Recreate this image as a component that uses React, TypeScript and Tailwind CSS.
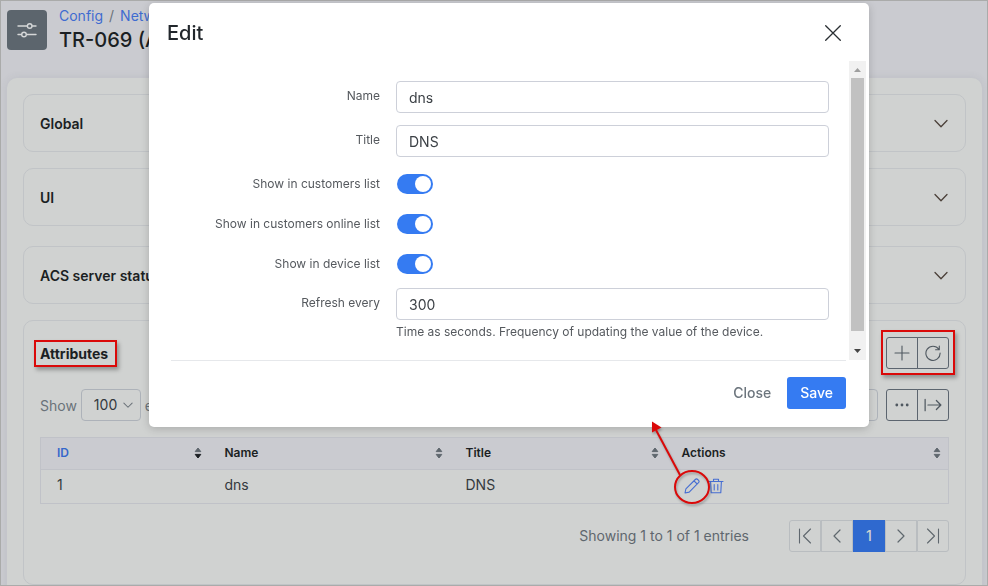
import type { ReactNode } from "react";

function Icon({ children, className = "size-4" }: { children: ReactNode; className?: string }) {
  return (
    <svg
      viewBox="0 0 16 16"
      className={`${className} shrink-0`}
      fill="none"
      stroke="currentColor"
      strokeLinecap="round"
      strokeLinejoin="round"
      aria-hidden="true"
    >
      {children}
    </svg>
  );
}

function Collapsed({ title }: { title: string }) {
  return (
    <section className="rounded-[10px] border border-[#c1c4c7]">
      <button type="button" className="flex h-14 w-full items-center justify-between px-4 pt-0.5 text-sm font-semibold text-[#1b1f23]">
        {title}
        <Icon>
          <path d="M2 4.500 8 10.700 14 4.500" stroke="#4b4039" strokeWidth="1.3" />
        </Icon>
      </button>
    </section>
  );
}

function SortIcon({ active = false }: { active?: boolean }) {
  return (
    <svg viewBox="0 0 8 12" className="h-3 w-2" aria-hidden="true">
      <path d="M4 1 6.8 4.6H1.2z" fill="#5f676e" stroke="#5f676e" strokeLinejoin="round" />
      <path d="M4 11 6.8 7.4H1.2z" fill={active ? "#1b1f23" : "#5f676e"} stroke={active ? "#1b1f23" : "#5f676e"} strokeLinejoin="round" />
    </svg>
  );
}

function Head({ label, width = "", active = false }: { label: string; width?: string; active?: boolean }) {
  return (
    <th scope="col" className={`h-8 p-0 text-left text-xs font-semibold ${width} ${active ? "text-[#3566cb]" : "text-[#1b1f23]"}`}>
      <div className="flex items-center justify-between pr-[7px] pb-0.5 pl-4">
        {label}
        <SortIcon active={active} />
      </div>
    </th>
  );
}

function TextRow({ id, label, value, help }: { id: string; label: string; value: string; help?: string }) {
  return (
    <div className="flex gap-4">
      <label htmlFor={id} className="h-[30px] w-[209px] shrink-0 text-right text-xs leading-[30px] text-[#55595e]">
        {label}
      </label>
      <div className="grow">
        <input
          id={id}
          type="text"
          defaultValue={value}
          className="block h-8 w-full rounded-sm border border-[#cdd0d9] bg-white px-3 pt-px text-sm text-[#3c4146] outline-none"
        />
        {help && <p className="pt-0.5 text-xs leading-5 text-[#55595e]">{help}</p>}
      </div>
    </div>
  );
}

function SwitchRow({ id, label }: { id: string; label: string }) {
  return (
    <div className="flex h-5 items-center gap-[17px]">
      <label htmlFor={id} className="w-[209px] shrink-0 text-right text-xs leading-5 text-[#55595e]">
        {label}
      </label>
      <input
        id={id}
        type="checkbox"
        role="switch"
        defaultChecked
        className="flex h-5 w-9 appearance-none items-center rounded-full bg-[#c5cad1] px-0.5 before:size-4 before:rounded-full before:bg-white checked:justify-end checked:bg-[#357bf2]"
      />
    </div>
  );
}

function EditDialog() {
  return (
    <div className="fixed inset-0 z-10 flex items-start justify-center pt-[3px] pl-[30px]">
      <div role="dialog" aria-labelledby="dialog-title" className="w-[720px] rounded-[5px] bg-white shadow-[0_2px_8px_rgba(0,0,0,0.18)]">
        <header className="flex h-[58px] items-center justify-between pt-0.5 pr-7 pl-[18px]">
          <h2 id="dialog-title" className="text-xl font-medium text-[#22272c]">Edit</h2>
          <button type="button" aria-label="Close dialog" className="text-[#2a2f33]">
            <Icon>
              <path d="M.7.7 15.3 15.3M15.3.7.7 15.3" strokeWidth="1.3" />
            </Icon>
          </button>
        </header>
        <div className="flex gap-[3px] pr-[3px] pl-[22px]">
          <div className="flex h-[300px] grow flex-col gap-3 border-b border-[#e6e8eb] pt-5 pr-[17px]">
            <TextRow id="name" label="Name" value="dns" />
            <TextRow id="title" label="Title" value="DNS" />
            <div className="flex flex-col gap-5 pt-[5px] pb-0.5">
              <SwitchRow id="customers" label="Show in customers list" />
              <SwitchRow id="online" label="Show in customers online list" />
              <SwitchRow id="device" label="Show in device list" />
            </div>
            <TextRow
              id="refresh"
              label="Refresh every"
              value="300"
              help="Time as seconds. Frequency of updating the value of the device."
            />
          </div>
          <div aria-hidden="true" className="flex h-[299px] w-[17px] shrink-0 flex-col items-center bg-[#f1f1f1]">
            <svg viewBox="0 0 17 17" className="size-[17px]">
              <path d="M5 11h7L8.500 7z" fill="#9f9f9f" />
            </svg>
            <div className="w-[13px] grow bg-[#c1c1c1]" />
            <svg viewBox="0 0 17 29" className="h-[29px] w-[17px]">
              <path d="M5 18h7l-3.500 4z" fill="#454545" />
            </svg>
          </div>
        </div>
        <footer className="flex items-center justify-end gap-4 pt-4 pr-[23px] pb-[18px]">
          <button type="button" className="h-8 text-sm font-medium text-[#6c757d]">Close</button>
          <button type="button" className="h-8 rounded-[3px] bg-[#357bf2] px-[13px] text-sm font-medium text-white">Save</button>
        </footer>
      </div>
    </div>
  );
}

const toolButton = "flex h-8 w-8 items-center justify-center border border-[#5c656f] text-[#4f5860]";
const pageButton = "flex h-8 w-8 items-center justify-center border border-[#b9bdc0]";
const highlight = "pointer-events-none absolute border-2 border-[#da0909] shadow-[2px_3px_4px_rgba(0,0,0,0.3)]";

export default function App() {
  return (
    <div className="h-screen overflow-hidden border border-[#aaabaa] bg-[#cacbd0] font-[Inter,sans-serif] text-sm">
      <header className="flex gap-3 px-1.5 pt-[9px]">
        <div className="flex size-10 items-center justify-center rounded bg-[#5c656d] text-[#d5d7d8]">
          <svg viewBox="0 0 20 18" className="h-[18px] w-5" fill="none" stroke="currentColor" strokeWidth="1.4" strokeLinecap="round" aria-hidden="true">
            <path d="M1 5h9M15.500 5h3.500M1 13.500h3.500M10 13.500h9" />
            <circle cx="12.700" cy="5" r="2.300" />
            <circle cx="7" cy="13.500" r="2.300" />
          </svg>
        </div>
        <div className="-mt-1">
          <nav aria-label="Breadcrumb" className="flex gap-1.5 leading-5 text-[#6a7279]">
            <a href="#config" className="text-[#3f6bd0]">Config</a>
            <span>/</span>
            <a href="#networking" className="text-[#3f6bd0]">Networking</a>
          </nav>
          <h1 className="text-xl leading-7 font-medium text-[#1b1f23]">TR-069 (ACS)</h1>
        </div>
      </header>

      <main className="mx-[5px] mt-6 ml-1.5 rounded-[10px] bg-[#d0d2d1] p-4 pb-10 shadow-[0_0_8px_rgba(70,80,100,0.1)]">
        <div className="flex flex-col gap-4">
          <Collapsed title="Global" />
          <Collapsed title="UI" />
        </div>
        <div className="mt-5 flex flex-col gap-4">
          <Collapsed title="ACS server status" />
          <section className="rounded-[10px] border border-[#c1c4c7] px-4 pt-4 pb-8">
            <div className="flex items-center justify-between">
              <h2 className="relative pt-0.5 font-bold text-[#1b1f23]">
                Attributes
                <span className={`${highlight} -top-0.5 -right-[9px] -bottom-[3px] -left-1.5`} />
              </h2>
              <div className="relative flex">
                <button type="button" aria-label="Add" className={`${toolButton} rounded-l-[3px]`}>
                  <Icon>
                    <path d="M8 1v14M1 8h14" strokeWidth="1.100" />
                  </Icon>
                </button>
                <button type="button" aria-label="Reload" className={`${toolButton} -ml-px rounded-r-[3px]`}>
                  <Icon>
                    <path d="M13.800 4.200A7.100 7.100 0 1 0 15.100 8M14.300 1v3.700h-3.700" strokeWidth="1.100" />
                  </Icon>
                </button>
                <span className={`${highlight} -top-[7px] -right-1.5 -bottom-1.5 -left-[5px]`} />
              </div>
            </div>

            <div className="mt-5 flex items-center justify-between gap-2">
              <div className="flex grow items-center gap-1 text-[#6a7279]">
                <label htmlFor="length" className="pt-0.5">Show</label>
                <div className="relative">
                  <select id="length" className="block h-8 w-[60px] appearance-none rounded-sm border border-[#adb2b9] pl-3 text-sm text-[#34393e] outline-none">
                    <option>100</option>
                  </select>
                  <Icon className="pointer-events-none absolute top-2.5 right-[7px] size-3">
                    <path d="M2.500 5.500 8 11l5.500-5.500" strokeWidth="1.400" />
                  </Icon>
                </div>
                <span className="pt-0.5">entries</span>
              </div>
              <input type="search" aria-label="Search" className="h-8 w-40 rounded-sm border border-[#adb2b9] outline-none" />
              <div className="flex">
                <button type="button" aria-label="More" className={`${toolButton} rounded-l-[3px]`}>
                  <Icon>
                    <g fill="currentColor" stroke="none">
                      <circle cx="2.800" cy="8" r="1.400" />
                      <circle cx="8" cy="8" r="1.400" />
                      <circle cx="13.200" cy="8" r="1.400" />
                    </g>
                  </Icon>
                </button>
                <button type="button" aria-label="Export" className={`${toolButton} -ml-px rounded-r-[3px]`}>
                  <Icon className="size-[18px]">
                    <path d="M1 3v10M3.500 8H15M11 4l4 4-4 4" strokeWidth="1.100" />
                  </Icon>
                </button>
              </div>
            </div>

            <table className="mt-4 w-full table-fixed border-collapse border border-[#c0c2c8] text-[#34393e]">
              <thead className="bg-[#cacbd0]">
                <tr className="border-b border-[#c0c2c8]">
                  <Head label="ID" width="w-[168px]" active />
                  <Head label="Name" width="w-[241px]" />
                  <Head label="Title" width="w-[216px]" />
                  <Head label="Actions" />
                </tr>
              </thead>
              <tbody>
                <tr>
                  <td className="h-[34px] pb-1 pl-4">1</td>
                  <td className="pb-1 pl-4">dns</td>
                  <td className="pb-1 pl-4">DNS</td>
                  <td className="pb-0.5 pl-4">
                    <div className="flex items-center gap-2 pl-0.5 text-[#466ed2]">
                      <div className="relative">
                        <button type="button" aria-label="Edit" className="block">
                          <Icon>
                            <path d="M1 15l.9-4.200L11.300 1.500a1.700 1.700 0 0 1 2.400 0l.8.8a1.700 1.700 0 0 1 0 2.400L5.200 14.100zM10 2.800 13.200 6" strokeWidth="1.100" />
                          </Icon>
                        </button>
                        <svg
                          viewBox="0 0 70 90"
                          className="pointer-events-none absolute -right-5 -bottom-3 z-20 h-[90px] w-[70px] max-w-none drop-shadow-[1px_2px_1px_rgba(0,0,0,0.25)]"
                          fill="none"
                          stroke="#da0909"
                          strokeWidth="2"
                          aria-hidden="true"
                        >
                          <ellipse cx="42" cy="71" rx="17" ry="16" />
                          <path d="M30 59 6 14" />
                          <path d="M2 5.500v11l9.500-5z" fill="#da0909" stroke="none" />
                        </svg>
                      </div>
                      <button type="button" aria-label="Delete">
                        <Icon>
                          <path d="M1 3.500h14M5.500 3.500V1.200h5v2.300M2.600 3.500l.6 11.300h9.600l.6-11.300M6.200 6.500v5.500M9.800 6.500v5.500" strokeWidth="1.100" />
                        </Icon>
                      </button>
                    </div>
                  </td>
                </tr>
              </tbody>
            </table>

            <div className="mt-4 flex items-center justify-end gap-10 text-[#5f676e]">
              <p>Showing 1 to 1 of 1 entries</p>
              <nav aria-label="Pagination" className="flex">
                <button type="button" aria-label="First" className={`${pageButton} rounded-l-[3px]`}>
                  <Icon>
                    <path d="M2.500 1v14M13.500 1 6.500 8l7 7" strokeWidth="1.100" />
                  </Icon>
                </button>
                <button type="button" aria-label="Previous" className={pageButton}>
                  <Icon>
                    <path d="M11 2 5 8l6 6" strokeWidth="1.200" />
                  </Icon>
                </button>
                <button type="button" aria-current="page" className="h-8 w-8 bg-[#2f69cf] font-medium text-[#d0d2d1]">1</button>
                <button type="button" aria-label="Next" className={pageButton}>
                  <Icon>
                    <path d="m5 2 6 6-6 6" strokeWidth="1.200" />
                  </Icon>
                </button>
                <button type="button" aria-label="Last" className={`${pageButton} rounded-r-[3px]`}>
                  <Icon>
                    <path d="M13.500 1v14M2.500 1l7 7-7 7" strokeWidth="1.100" />
                  </Icon>
                </button>
              </nav>
            </div>
          </section>
        </div>
      </main>
      <EditDialog />
    </div>
  );
}
